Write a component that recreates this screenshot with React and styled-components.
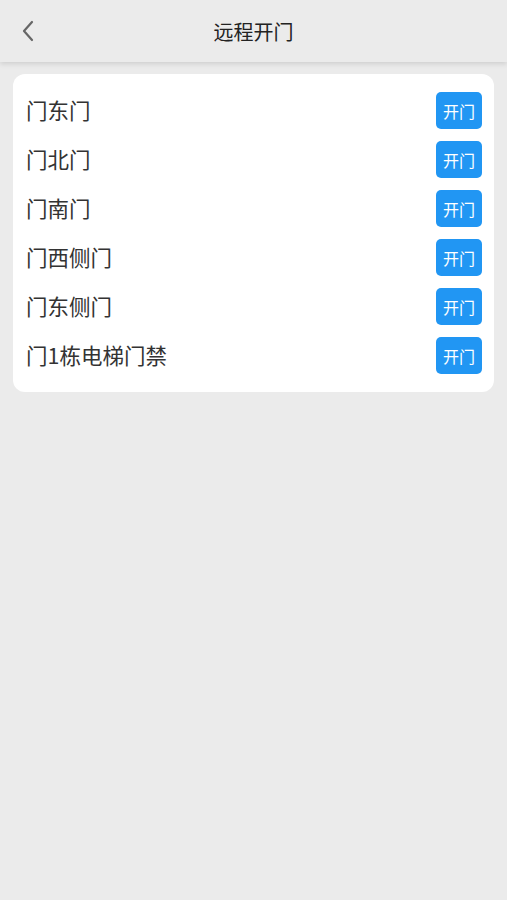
import styled, { createGlobalStyle } from "styled-components"

const Global = createGlobalStyle`
  html, body {
    margin: 0;
    padding: 0;
    background: #ebebeb;
  }
  body {
    font-family: "Noto Sans CJK SC", "Noto Sans", sans-serif;
  }
`

const Page = styled.div`
  min-height: 900px;
  background: #ebebeb;
`

const Header = styled.div`
  height: 62px;
  display: grid;
  grid-template-columns: 62px 1fr 62px;
  align-items: center;
  background: #ebebeb;
  box-shadow: 0 2px 5px rgba(0, 0, 0, 0.12);
  position: relative;
`

const Back = styled.div`
  display: flex;
  align-items: center;
  padding-left: 20px;
`

const Title = styled.h1`
  margin: 0;
  text-align: center;
  font-size: 20px;
  font-weight: 400;
  color: #222;
`

const Card = styled.div`
  margin: 12px 13px 0;
  background: #fff;
  border-radius: 12px;
  padding: 12px 12px 12px 13px;
`

const Row = styled.div`
  height: 49px;
  display: flex;
  align-items: center;
  justify-content: space-between;
`

const Name = styled.span`
  font-size: 21.5px;
  line-height: 1;
  color: #333;
  margin-top: -2px;
`

const OpenBtn = styled.button`
  width: 46px;
  height: 37px;
  border: none;
  border-radius: 5px;
  background: #2196f3;
  color: #fff;
  font-family: inherit;
  font-size: 16px;
  padding: 0;
`

const doors = ["门东门", "门北门", "门南门", "门西侧门", "门东侧门", "门1栋电梯门禁"]

const App = () => {
  return (
    <Page>
      <Global />
      <Header>
        <Back>
          <svg width="16" height="24" viewBox="0 0 16 24">
            <path d="M12 3 L4 12 L12 21" fill="none" stroke="#666" strokeWidth="2.2" strokeLinecap="round" strokeLinejoin="round" />
          </svg>
        </Back>
        <Title>远程开门</Title>
        <div />
      </Header>
      <Card>
        {doors.map((d) => (
          <Row key={d}>
            <Name>{d}</Name>
            <OpenBtn>开门</OpenBtn>
          </Row>
        ))}
      </Card>
    </Page>
  )
}

export default App
